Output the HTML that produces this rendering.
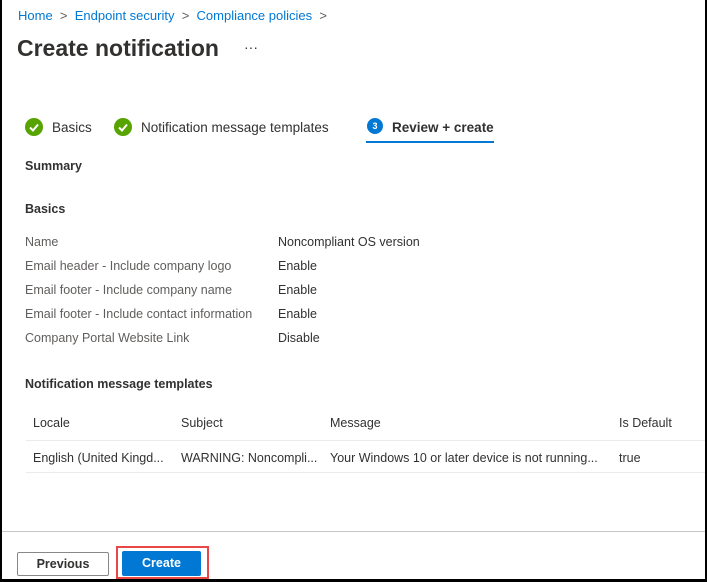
<!DOCTYPE html>
<html><head><style>
*{margin:0;padding:0;box-sizing:border-box}
body{width:707px;height:582px;background:#000;font-family:"Liberation Sans",sans-serif;color:#323130;font-size:12.5px;overflow:hidden;position:relative}
#f{position:absolute;left:2px;top:0;width:703px;height:579px;background:#fff;overflow:hidden}
.a{position:absolute;white-space:nowrap}
.bc{color:#0078d4;font-size:13px}
.gr{color:#605e5c}
.chk{position:absolute;width:18px;height:18px;border-radius:50%;background:#57a300}
.h{font-weight:bold}
</style></head><body><div id="f">
<div class="a bc" style="left:16px;top:8px">Home <span class="gr">&nbsp;&gt;&nbsp;</span> Endpoint security <span class="gr">&nbsp;&gt;&nbsp;</span> Compliance policies <span class="gr">&nbsp;&gt;</span></div>
<div class="a" style="left:15px;top:35px;font-size:23px;font-weight:bold;color:#323130">Create notification</div>
<div class="a" style="left:242px;top:39px;font-size:14px">···</div>
<div class="chk" style="left:23px;top:118px"><svg width="18" height="18"><path d="M5 9.5l3 3 5-6" stroke="#fff" stroke-width="2" fill="none"/></svg></div>
<div class="a" style="left:50px;top:120px;font-size:13.5px">Basics</div>
<div class="chk" style="left:112px;top:118px"><svg width="18" height="18"><path d="M5 9.5l3 3 5-6" stroke="#fff" stroke-width="2" fill="none"/></svg></div>
<div class="a" style="left:139px;top:120px;font-size:13.5px">Notification message templates</div>
<div class="a" style="left:365px;top:118px;width:16px;height:16px;border-radius:50%;background:#0078d4;color:#fff;font-size:9px;font-weight:bold;text-align:center;line-height:16px">3</div>
<div class="a" style="left:390px;top:120px;font-size:13.5px;font-weight:bold">Review + create</div>
<div class="a" style="left:364px;top:141px;width:128px;height:2px;background:#0078d4"></div>
<div class="a h" style="left:23px;top:159px">Summary</div>
<div class="a h" style="left:23px;top:202px">Basics</div>
<div class="a gr" style="left:23px;top:230px;line-height:24px">Name<br>Email header - Include company logo<br>Email footer - Include company name<br>Email footer - Include contact information<br>Company Portal Website Link</div>
<div class="a" style="left:276px;top:230px;line-height:24px">Noncompliant OS version<br>Enable<br>Enable<br>Enable<br>Disable</div>
<div class="a h" style="left:23px;top:377px">Notification message templates</div>
<div class="a" style="left:31px;top:416px">Locale</div>
<div class="a" style="left:179px;top:416px">Subject</div>
<div class="a" style="left:328px;top:416px">Message</div>
<div class="a" style="left:617px;top:416px">Is Default</div>
<div class="a" style="left:24px;top:440px;width:680px;height:1px;background:#edebe9"></div>
<div class="a" style="left:31px;top:451px">English (United Kingd...</div>
<div class="a" style="left:179px;top:451px">WARNING: Noncompli...</div>
<div class="a" style="left:328px;top:451px">Your Windows 10 or later device is not running...</div>
<div class="a" style="left:617px;top:451px">true</div>
<div class="a" style="left:24px;top:472px;width:680px;height:1px;background:#edebe9"></div>
<div class="a" style="left:0;top:531px;width:703px;height:1px;background:#c8c6c4"></div>
<div class="a" style="left:15px;top:552px;width:92px;height:24px;border:1px solid #8a8886;border-radius:2px;text-align:center;line-height:22px;font-weight:bold">Previous</div>
<div class="a" style="left:114px;top:546px;width:93px;height:33px;border:2px solid #e8474a"></div>
<div class="a" style="left:120px;top:551px;width:79px;height:25px;background:#0078d4;border-radius:2px;color:#fff;text-align:center;line-height:25px;font-weight:bold">Create</div>
</div></body></html>
